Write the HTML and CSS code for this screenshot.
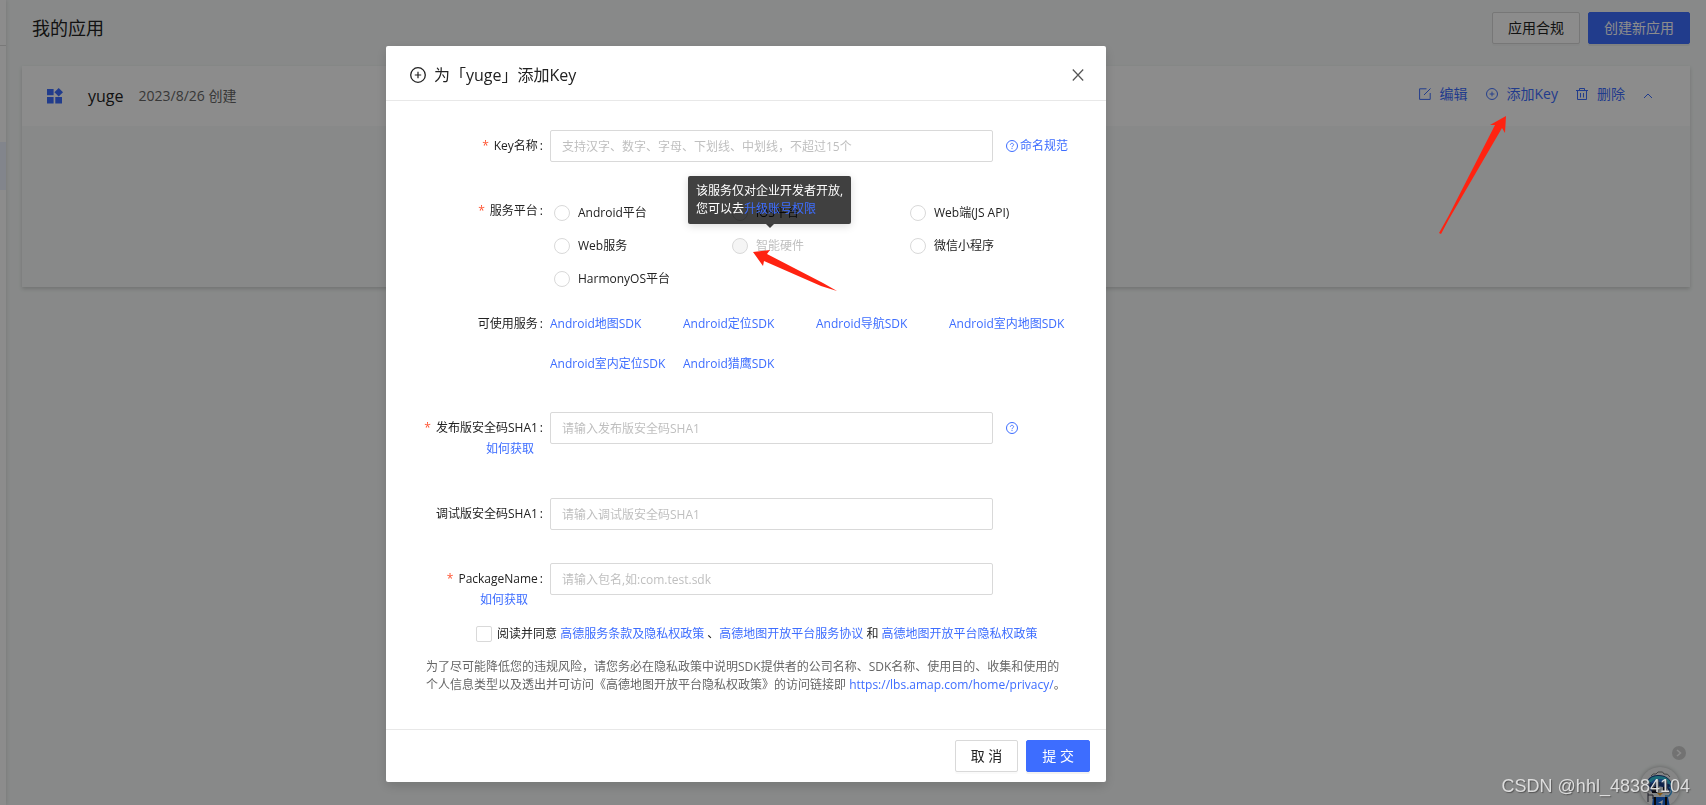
FILE: index.html
```html
<!DOCTYPE html>
<html lang="zh-CN">
<head>
<meta charset="utf-8">
<title>我的应用</title>
<link rel="stylesheet" href="styles.css">
</head>
<body>
<svg class="sprite" aria-hidden="true">
  <symbol id="plus-circle" viewBox="0 0 16 16"><circle cx="8" cy="8" r="7.3" fill="none" stroke="currentColor" stroke-width="1.3"/><path d="M8 4.8v6.4M4.8 8h6.4" fill="none" stroke="currentColor" stroke-width="1.2"/></symbol>
  <symbol id="help" viewBox="0 0 12 12"><circle cx="6" cy="6" r="5.5" fill="none" stroke="currentColor"/><path d="M4.4 4.8c0-2 3.2-2 3.2 0C7.6 5.8 6 5.8 6 7.2M6 8v1.1" fill="none" stroke="currentColor" stroke-width=".9"/></symbol>
</svg>
<div class="page">
  <aside class="side"><div class="side-top"></div><div class="side-gap"></div><div class="side-active"></div></aside>
  <main class="main">
    <header class="top">
      <h1 class="top-title">我的应用</h1>
      <div class="top-buttons">
        <button class="btn" type="button">应用合规</button>
        <button class="btn btn-primary" type="button">创建新应用</button>
      </div>
    </header>
    <section class="card">
      <div class="card-head">
        <svg class="app-icon" viewBox="0 0 16 16" fill="currentColor"><rect y="1" width="6.6" height="6.2"/><rect y="9" width="6.6" height="6.5"/><rect x="8.3" y="9" width="6.7" height="6.5"/><path d="M11.7 0l4.3 4.2-4.3 4.3-4.3-4.3z"/></svg>
        <h2 class="app-name">yuge</h2>
        <span class="app-date">2023/8/26 创建</span>
        <div class="actions">
          <a class="action" href="#"><svg class="icon" viewBox="0 0 12 12" fill="none" stroke="currentColor"><path d="M7.500.8H.6v10.600h10.600V5M5 7l6.500-6.500"/></svg>编辑</a>
          <a class="action" href="#"><svg class="icon"><use href="#plus-circle"/></svg>添加Key</a>
          <a class="action" href="#"><svg class="icon" viewBox="0 0 12 12" fill="none" stroke="currentColor"><path d="M0 2.500h12M3.500 2V.5h5V2M1.500 3v8.500h9V3M4.500 5v4.500M7.500 5v4.500"/></svg>删除</a>
          <button class="collapse" type="button" aria-label="收起"><svg class="caret" viewBox="0 0 10 6" fill="none" stroke="currentColor"><path d="M1 5l4-4 4 4"/></svg></button>
        </div>
      </div>
      <div class="card-body"></div>
    </section>
  </main>
  <div class="float-next"><svg class="next-arrow" viewBox="0 0 6 8" fill="none" stroke="currentColor" stroke-width="1.5"><path d="M1 1l3.500 3L1 7"/></svg></div>
  <div class="mascot">
    <svg class="mascot-art" viewBox="0 0 40 40">
      <path d="M11 9q2-3 5-2 2-3 4-2 3-1 4 2 4-1 6 3" fill="none" stroke="#777"/>
      <path d="M7 20C6 9 14 8 19 8c6 0 14 4 13 13l-3 5-17-1z" fill="#183c86"/>
      <path d="M8 16C9 10 14 9 19 9c7 0 12 4 12 9-8-4-15-5-23-2z" fill="#35c5dc"/>
      <path d="M10 17c2-4 5-5 9-5 5 0 8 2 10 5-7-3-12-3-19 0z" fill="#2a7be0"/>
      <path d="M12 22q8-5 16 0l-2 7H14z" fill="#e8eef2"/>
      <path d="M12 20h5v6h-5zM23 20h4v5h-4z" fill="#112"/>
      <path d="M17 26h6l-3 3z" fill="#f4a526"/>
      <path d="M29 20q5 4 0 9h-4" fill="none" stroke="#3aa0e8" stroke-width="1.5"/>
      <path d="M13 30h15l2 10H12z" fill="#1668dc"/><path d="M15 30v10M26 30v10" stroke="#111" stroke-width="2"/><path d="M18 36l5-3-1 6-1-3z" fill="#fff"/>
      <path d="M8 26v9M8 28h5v4" stroke="#334" fill="none"/>
    </svg>
  </div>
</div>

<div class="mask">
  <form class="modal" role="dialog" aria-labelledby="dialog-title">
    <header class="modal-head">
      <svg class="modal-icon"><use href="#plus-circle"/></svg>
      <h2 class="modal-title" id="dialog-title">为「yuge」添加Key</h2>
      <button class="close" type="button" aria-label="关闭"><svg class="close-icon" viewBox="0 0 12 12" fill="none" stroke="currentColor" stroke-width="1.2"><path d="M.8.5l10.400 11M11.200.5L.8 11.500"/></svg></button>
    </header>
    <div class="modal-body">
      <div class="row row-name">
        <label class="label required" for="key-name">Key名称</label>
        <input class="text" id="key-name" type="text" placeholder="支持汉字、数字、字母、下划线、中划线，不超过15个">
        <a class="hint" href="#"><svg class="help"><use href="#help"/></svg>命名规范</a>
      </div>
      <div class="row row-platform" role="group" aria-labelledby="platform-label">
        <span class="label required" id="platform-label">服务平台</span>
        <div class="radios">
          <label class="option"><input class="radio" type="radio" name="platform">Android平台</label>
          <label class="option"><input class="radio" type="radio" name="platform">iOS平台</label>
          <label class="option"><input class="radio" type="radio" name="platform">Web端(JS API)</label>
          <label class="option"><input class="radio" type="radio" name="platform">Web服务</label>
          <label class="option option-off"><input class="radio" type="radio" name="platform" disabled>智能硬件
            <span class="tooltip" role="tooltip">该服务仅对企业开发者开放,<br>您可以去<a href="#">升级账号权限</a></span></label>
          <label class="option"><input class="radio" type="radio" name="platform">微信小程序</label>
          <label class="option"><input class="radio" type="radio" name="platform">HarmonyOS平台</label>
        </div>
      </div>
      <div class="row row-services">
        <span class="label">可使用服务</span>
        <div class="services">
          <a href="#">Android地图SDK</a><a href="#">Android定位SDK</a><a href="#">Android导航SDK</a><a href="#">Android室内地图SDK</a>
          <a href="#">Android室内定位SDK</a><a href="#">Android猎鹰SDK</a>
        </div>
      </div>
      <div class="row row-release">
        <div class="label-stack"><label class="label required" for="sha-release">发布版安全码SHA1</label><a class="how" href="#">如何获取</a></div>
        <input class="text" id="sha-release" type="text" placeholder="请输入发布版安全码SHA1">
        <a class="hint" href="#" aria-label="帮助"><svg class="help"><use href="#help"/></svg></a>
      </div>
      <div class="row row-debug">
        <label class="label" for="sha-debug">调试版安全码SHA1</label>
        <input class="text" id="sha-debug" type="text" placeholder="请输入调试版安全码SHA1">
      </div>
      <div class="row row-package">
        <div class="label-stack"><label class="label required" for="package">PackageName</label><a class="how how-package" href="#">如何获取</a></div>
        <input class="text" id="package" type="text" placeholder="请输入包名,如:com.test.sdk">
      </div>
      <div class="agree">
        <input class="check" id="agree" type="checkbox">
        <label for="agree">阅读并同意 <a href="#">高德服务条款及隐私权政策</a> 、<a href="#">高德地图开放平台服务协议</a> 和 <a href="#">高德地图开放平台隐私权政策</a></label>
      </div>
      <p class="note">为了尽可能降低您的违规风险，请您务必在隐私政策中说明SDK提供者的公司名称、SDK名称、使用目的、收集和使用的<br>个人信息类型以及透出并可访问《高德地图开放平台隐私权政策》的访问链接即 <a href="#">https://lbs.amap.com/home/privacy/</a>。</p>
    </div>
    <footer class="modal-foot">
      <button class="btn" type="button">取 消</button>
      <button class="btn btn-primary" type="submit">提 交</button>
    </footer>
  </form>
</div>
<svg class="pointer pointer-add" viewBox="0 0 67 118" fill="#ff2311"><path d="M0 117L9 101 56 9 51 9 67 0 66 17 63 12 10 103 2 118z"/></svg>
<svg class="pointer pointer-option" viewBox="0 0 84 42" fill="#ff2311"><path d="M0 2L17 0 14 4 70 33 84 41 68 36 11 11 10 16z"/></svg>
<div class="watermark">CSDN @hhl_48384104</div>
</body>
</html>
```
FILE: styles.css
```css
* { box-sizing: border-box; }
body {
  margin: 0;
  font-family: "Open Sans", "Noto Sans CJK SC", sans-serif;
  font-size: 12px;
  line-height: 18px;
  color: #222;
  overflow: hidden;
}
a { color: #3d6dff; text-decoration: none; }
h1, h2, p { margin: 0; font-weight: 400; }
button, input { font: inherit; color: inherit; }
svg { display: block; flex: none; }
.sprite { position: absolute; width: 0; height: 0; }

.page { display: flex; min-height: 100vh; background: #f7faf9; }
.side { width: 6px; flex: none; background: #fff; box-shadow: 0 0 4px rgba(0, 0, 0, .15); }
.side-top { height: 46px; border-bottom: 1px solid #ddd; }
.side-gap { height: 96px; }
.side-active { height: 48px; background: #edf2ff; }
.main { flex: 1; padding: 12px 16px; }
.top { display: flex; align-items: center; justify-content: space-between; height: 32px; padding-left: 10px; margin-bottom: 22px; }
.top-title { font-size: 18px; line-height: 32px; }
.top-buttons { display: flex; gap: 8px; }

.btn {
  height: 32px;
  padding: 0 15px;
  border: 1px solid #d9d9d9;
  border-radius: 2px;
  background: #fff;
  font-size: 14px;
  line-height: 30px;
  box-shadow: 0 2px 0 rgba(0, 0, 0, .02);
}
.btn-primary { background: #3d6dff; border-color: #3d6dff; color: #fff; box-shadow: 0 2px 0 rgba(0, 0, 0, .05); }

.card { box-shadow: 0 2px 4px rgba(0, 0, 0, .16); }
.card-head { display: flex; align-items: center; height: 60px; padding: 0 37px 0 25px; background: #fff; }
.card-body { height: 161px; }
.app-icon { width: 16px; height: 16px; color: #3d6dff; }
.app-name { margin-left: 25px; font-size: 16px; line-height: 24px; }
.app-date { margin-left: 15px; font-size: 14px; color: #666; }
.actions { display: flex; align-items: center; gap: 18px; margin-left: auto; padding-bottom: 4px; font-size: 14px; }
.action { display: flex; align-items: center; gap: 9px; }
.icon { width: 12px; height: 12px; }
.collapse { display: flex; padding: 4px 0 0; border: 0; background: none; color: #3d6dff; }
.caret { width: 10px; height: 6px; }

.mask {
  position: fixed;
  inset: 0;
  display: flex;
  justify-content: center;
  align-items: flex-start;
  padding: 46px 214px 0 0;
  background: rgba(0, 0, 0, .45);
}
.modal { width: 720px; border-radius: 2px; background: #fff; box-shadow: 0 4px 12px rgba(0, 0, 0, .15); }
.modal-head { display: flex; align-items: center; height: 55px; padding: 3px 22px 0 24px; border-bottom: 1px solid #e8e8e8; }
.modal-icon { width: 16px; height: 16px; }
.modal-title { margin-left: 8px; font-size: 16px; line-height: 24px; }
.close { margin-left: auto; padding: 0; border: 0; background: none; color: #555; }
.close-icon { width: 12px; height: 12px; }
.modal-body { padding: 29px 20px 0 40px; }
.row { display: grid; grid-template-columns: 124px minmax(0, 443px) auto; justify-content: start; align-items: start; }
.label { padding-right: 7px; line-height: 32px; text-align: right; white-space: nowrap; }
.label::after { content: ":"; margin-left: 2px; }
.required::before { content: "*"; margin-right: 5px; color: #ff5533; }
.text { width: 100%; height: 32px; padding: 0 11px; border: 1px solid #d9d9d9; border-radius: 2px; background: #fff; outline: none; }
.text::placeholder { color: #bfbfbf; }
.hint { display: flex; align-items: center; gap: 2px; height: 32px; margin-left: 13px; }
.help { width: 12px; height: 12px; }
.row-name { margin-bottom: 33px; }
.row-platform { grid-template-columns: 124px 1fr; margin-bottom: 20px; }
.radios { display: grid; grid-template-columns: repeat(3, 178px); grid-auto-rows: 33px; padding: 1px 0 0 4px; }
.option { position: relative; display: flex; align-items: center; gap: 8px; justify-self: start; }
.option-off { color: #bfbfbf; }
.radio, .check { appearance: none; flex: none; width: 16px; height: 16px; margin: 0; border: 1px solid #d9d9d9; background: #fff; }
.radio { border-radius: 50%; }
.radio:disabled { background: #f5f5f5; }
.check { border-radius: 2px; }
.tooltip {
  position: absolute;
  left: -44px;
  bottom: 38px;
  z-index: 1;
  padding: 6px 8px;
  border-radius: 2px;
  background: rgba(0, 0, 0, .75);
  color: #fff;
  white-space: nowrap;
  box-shadow: 0 2px 8px rgba(0, 0, 0, .15);
}
.tooltip::after { content: ""; position: absolute; left: 50%; top: 100%; margin-left: -4px; border: 4px solid transparent; border-top-color: rgba(0, 0, 0, .75); border-bottom: 0; }
.row-services { grid-template-columns: 124px 1fr; margin-bottom: 39px; }
.row-services .label { line-height: 18px; }
.services { display: grid; grid-template-columns: repeat(4, 133px); row-gap: 22px; white-space: nowrap; }
.label-stack { display: flex; flex-direction: column; align-items: flex-end; }
.how { margin-right: 16px; margin-top: -4px; }
.how-package { margin-right: 22px; }
.row-release { margin-bottom: 40px; }
.row-debug { margin-bottom: 33px; }
.row-package { margin-bottom: 16px; }
.agree { display: flex; align-items: center; gap: 5px; margin-left: 50px; margin-bottom: 15px; }
.note { color: #666; white-space: nowrap; padding-bottom: 35px; }
.modal-foot { display: flex; justify-content: flex-end; gap: 8px; padding: 10px 16px; border-top: 1px solid #e8e8e8; }

.float-next { position: absolute; right: 20px; bottom: 45px; display: grid; place-items: center; width: 14px; height: 14px; border-radius: 50%; background: #d0d0d0; color: #fff; }
.next-arrow { width: 6px; height: 8px; }
.mascot { position: absolute; right: 26px; bottom: -2px; width: 40px; height: 40px; border-radius: 50%; background: #f4f5f5; box-shadow: 0 0 4px rgba(0, 0, 0, .3); }
.mascot-art { width: 40px; height: 40px; }
.pointer { position: absolute; }
.pointer-add { left: 1439px; top: 116px; width: 67px; height: 118px; }
.pointer-option { left: 753px; top: 250px; width: 84px; height: 42px; }
.watermark {
  position: absolute;
  right: 16px;
  bottom: 8px;
  font-family: "Liberation Sans", sans-serif;
  font-size: 18px;
  line-height: 22px;
  color: #ddd;
  text-shadow: 1px 1px 1px #555;
}
```
